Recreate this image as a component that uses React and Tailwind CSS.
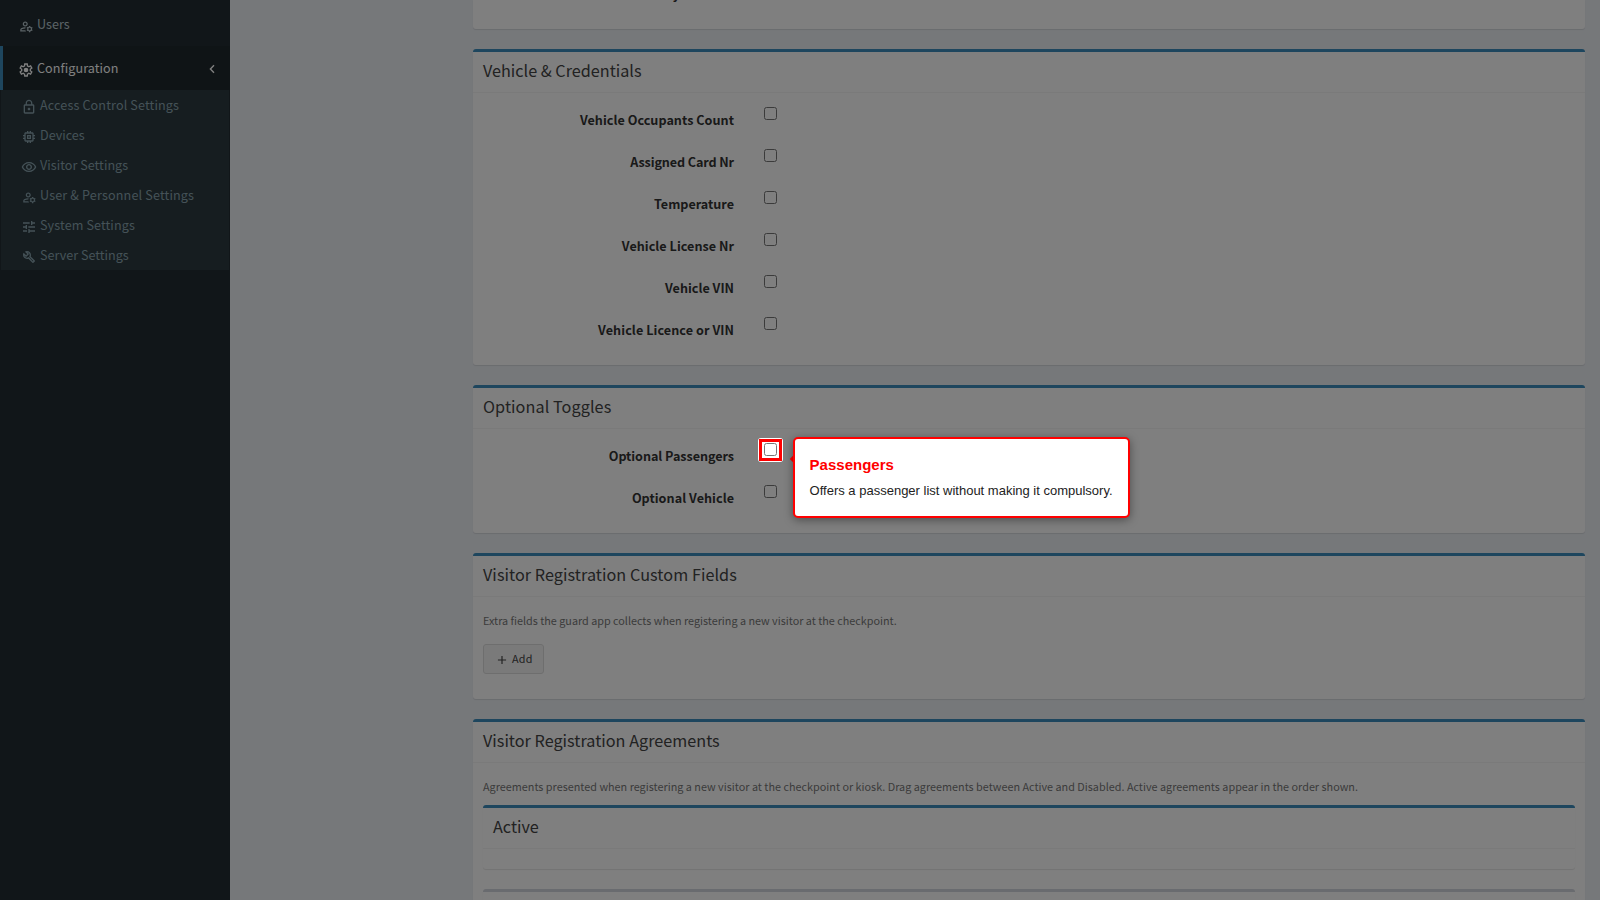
import React from 'react';
import {
  MdAdd,
  MdLockOutline,
  MdMemory,
  MdOutlineManageAccounts,
  MdOutlineRemoveRedEye,
  MdTune,
} from 'react-icons/md';

function GearIcon({ className }) {
  return (
    <svg viewBox="0 -960 960 960" fill="currentColor" className={className}>
      <path d="m370-80-16-128q-13-5-24.5-12T307-235l-119 50L78-375l103-78q-1-7-1-13.5v-27q0-6.5 1-13.5L78-585l110-190 119 50q11-8 23-15t24-12l16-128h220l16 128q13 5 24.5 12t22.5 15l119-50 110 190-103 78q1 7 1 13.5v27q0 6.5-2 13.5l103 78-110 190-118-50q-11 8-23 15t-24 12L590-80H370Zm70-80h79l14-106q31-8 57.5-23.5T639-327l99 41 39-68-86-65q5-14 7-29.5t2-31.5q0-16-2-31.5t-7-29.5l86-65-39-68-99 42q-22-23-48.5-38.5T533-694l-13-106h-79l-14 106q-31 8-57.5 23.5T321-633l-99-41-39 68 86 64q-5 15-7 30t-2 32q0 16 2 31t7 30l-86 65 39 68 99-42q22 23 48.5 38.5T427-266l13 106Z" />
      <circle cx="481" cy="-480" r="140" />
    </svg>
  );
}

function WrenchIcon({ className }) {
  return (
    <svg viewBox="0 -960 960 960" fill="currentColor" className={className}>
      <path d="M686-132 444-376q-20 8-40.5 12t-43.5 4q-100 0-170-70t-70-170q0-36 10-68.5t28-61.5l146 146 72-72-146-146q29-18 61.5-28t68.5-10q100 0 170 70t70 170q0 23-4 43.5T584-516l244 242q12 12 12 29t-12 29l-84 84q-12 12-29 12t-29-12Zm29-85 27-27-256-256q18-20 26-46.5t8-53.5q0-60-38.5-104.5T386-758l74 74q12 12 12 28t-12 28L332-500q-12 12-28 12t-28-12l-74-74q9 57 53.5 95.5T360-440q26 0 52-8t47-25l256 256Z" />
    </svg>
  );
}

function AccountsIcon() {
  return <MdOutlineManageAccounts className="mx-[0.5px] mt-1 size-[15px]" />;
}

const subItems = [
  { label: 'Access Control Settings', icon: MdLockOutline, tracking: 'tracking-[0.13px]' },
  { label: 'Devices', icon: MdMemory, tracking: '' },
  { label: 'Visitor Settings', icon: MdOutlineRemoveRedEye, tracking: 'tracking-[0.03px]' },
  { label: 'User & Personnel Settings', icon: AccountsIcon, tracking: 'tracking-[0.15px]' },
  { label: 'System Settings', icon: MdTune, tracking: 'tracking-[0.1px]' },
  { label: 'Server Settings', icon: WrenchIcon, tracking: '' },
];

const credentials = [
  { label: 'Vehicle Occupants Count', tracking: 'tracking-[0.03px]' },
  { label: 'Assigned Card Nr', tracking: 'tracking-[-0.1px]' },
  { label: 'Temperature' },
  { label: 'Vehicle License Nr', tracking: 'tracking-[0.03px]' },
  { label: 'Vehicle VIN' },
  { label: 'Vehicle Licence or VIN', tracking: 'tracking-[0.07px]' },
];

function Sidebar() {
  return (
    <aside className="w-[230px] shrink-0 bg-[#222d32] text-[12.6px] leading-5 text-[#b8c7ce]">
      <div className="flex h-[46px] items-center pl-[18px] pt-[2px]">
        <AccountsIcon />
        <span className="ml-[3px]">Users</span>
      </div>
      <div className="flex h-11 items-center border-l-3 border-[#3c8dbc] bg-[#1e282c] pl-[15px] text-white">
        <GearIcon className="mt-1 size-4" />
        <span className="ml-[3px] tracking-[0.07px]">Configuration</span>
        <svg viewBox="0 0 6 10" className="ml-auto mr-[15px] mt-0.5 h-2.5 w-1.5">
          <path d="M5 1.2 1.4 5 5 8.8" fill="none" stroke="currentColor" strokeWidth="1.4" />
        </svg>
      </div>
      <ul className="mx-px bg-[#2c3b41] text-[#8aa4af]">
        {subItems.map(({ label, icon: Icon, tracking }) => (
          <li key={label} className="flex h-[30px] items-center pl-5">
            <Icon className="mt-1 size-4" />
            <span className={`ml-[3px] ${tracking}`}>{label}</span>
          </li>
        ))}
      </ul>
    </aside>
  );
}

function Box({ title, className = '', tracking = '', children }) {
  return (
    <section className={`mb-5 rounded-[3px] border-t-3 border-[#3c8dbc] bg-white shadow-[0_1px_1px_rgba(0,0,0,0.1)] ${className}`}>
      <h3 className={`h-[41px] border-b border-[#f4f4f4] px-2.5 pt-[7px] text-[16.2px] leading-[22px] text-[#444] ${tracking}`}>
        {title}
      </h3>
      {children}
    </section>
  );
}

function CheckRow({ label, tracking = '', children }) {
  return (
    <div className="flex h-[42px] text-[#333]">
      <label className={`w-[251px] pt-[7px] text-right text-[12.6px] font-bold leading-5 ${tracking}`}>{label}</label>
      <div className="relative ml-[30px] mt-1 size-[13px]">
        <input type="checkbox" className="block size-[13px]" />
        {children}
      </div>
    </div>
  );
}

// Dims the rest of the page around the highlighted checkbox
function Spotlight() {
  return (
    <>
      <div className="pointer-events-none absolute -left-[6px] -top-[5px] z-10 h-6 w-[25px] rounded-[3px] shadow-[0_0_0_2000px_rgba(0,0,0,0.5)]" />
      <div className="pointer-events-none absolute -left-[5px] -top-[4px] z-20 h-[22px] w-[23px] border-3 border-[red]" />
      <div className="absolute left-[27px] top-[13px] z-20 size-1.5 rotate-45 bg-[red]" />
      <div className="absolute left-[29px] -top-[6px] z-20 h-[81px] w-[337px] rounded-[5px] border-2 border-[red] bg-white px-[14.6px] pt-4 font-['Liberation_Sans',sans-serif] shadow-[0_2px_10px_rgba(0,0,0,0.4)]">
        <div className="whitespace-nowrap text-[15px] font-bold leading-5 text-[red]">Passengers</div>
        <div className="mt-1.5 whitespace-nowrap text-[13px] leading-5 text-[#222]">
          Offers a passenger list without making it compulsory.
        </div>
      </div>
    </>
  );
}

function App() {
  return (
    <div className="relative flex h-[900px] w-[1600px] overflow-hidden bg-[#ecf0f5] font-['Noto_Sans_CJK_SC',sans-serif]">
      <Sidebar />
      <main className="ml-[243px] w-[1112px]">
        <section className="mb-5 h-[29px] overflow-hidden rounded-b-[3px] bg-white shadow-[0_1px_1px_rgba(0,0,0,0.1)]">
          <div className="-mt-[23px] pl-2.5">
            <CheckRow label="Any Material" />
          </div>
        </section>

        <Box title="Vehicle & Credentials">
          <div className="p-2.5">
            {credentials.map((row) => (
              <CheckRow key={row.label} {...row} />
            ))}
          </div>
        </Box>

        <Box title="Optional Toggles" tracking="tracking-[0.08px]">
          <div className="p-2.5">
            <CheckRow label="Optional Passengers" tracking="tracking-[-0.05px]">
              <Spotlight />
            </CheckRow>
            <CheckRow label="Optional Vehicle" tracking="tracking-[0.04px]" />
          </div>
        </Box>

        <Box title="Visitor Registration Custom Fields" tracking="tracking-[0.06px]">
          <div className="h-[102px] px-2.5 pt-[13px]">
            <p className="text-[10.8px] leading-5 text-[#777]">
              Extra fields the guard app collects when registering a new visitor at the checkpoint.
            </p>
            <button className="mt-3.5 flex h-[30px] w-[61px] items-center rounded-[3px] border border-[#ddd] bg-[#f4f4f4] pl-[11px] text-[10.8px] text-[#444]">
              <MdAdd className="mt-px size-3.5" />
              <span className="-mt-0.5 ml-[3px] tracking-[0.3px]">Add</span>
            </button>
          </div>
        </Box>

        <Box title="Visitor Registration Agreements" tracking="tracking-[0.02px]">
          <div className="px-2.5 pt-[13px]">
            <p className="text-[10.8px] leading-5 tracking-[0.016px] text-[#777]">
              Agreements presented when registering a new visitor at the checkpoint or kiosk. Drag agreements between
              Active and Disabled. Active agreements appear in the order shown.
            </p>
            <Box title="Active" className="mt-[9px]">
              <div className="h-5" />
            </Box>
            <section className="h-16 rounded-[3px] border-t-3 border-[#d2d6de] bg-white shadow-[0_1px_1px_rgba(0,0,0,0.1)]" />
          </div>
        </Box>
      </main>
    </div>
  );
}

export default App;
